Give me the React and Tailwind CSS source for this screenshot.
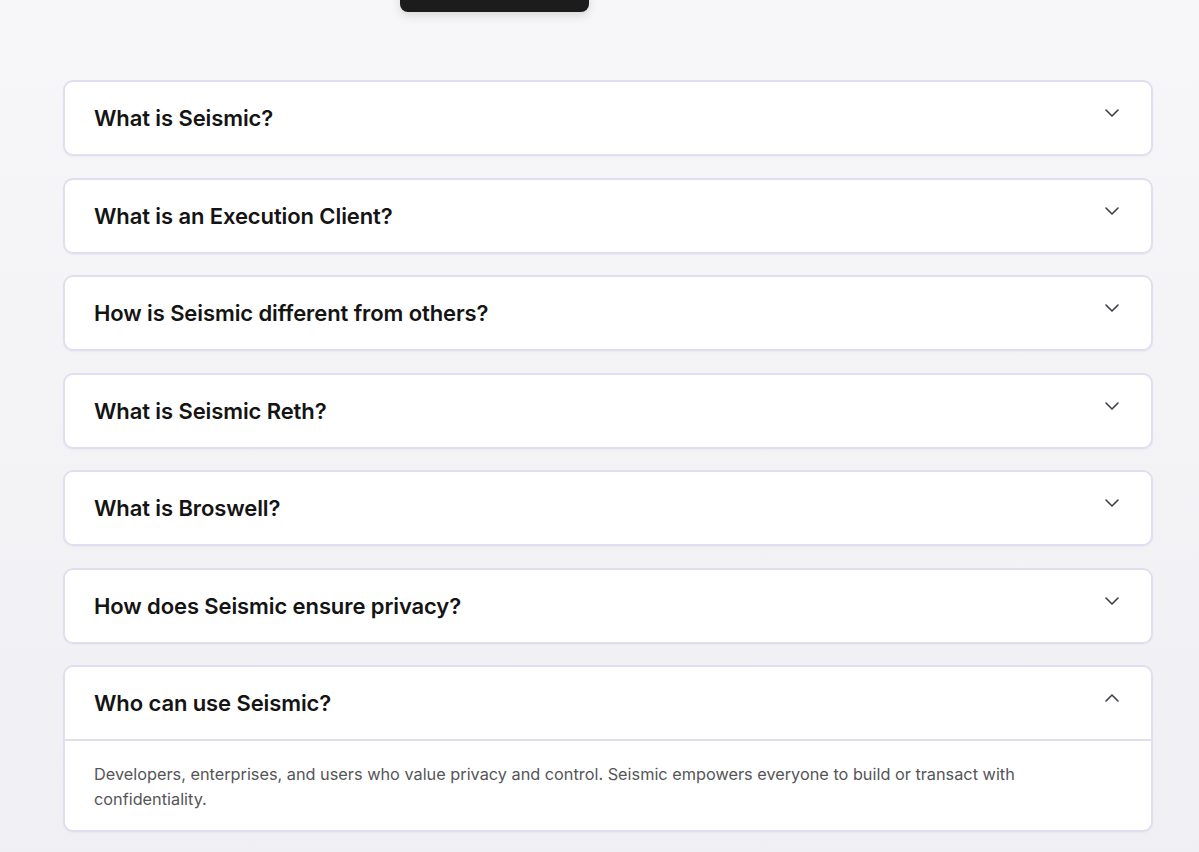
import { useState } from "react";
import { ChevronDown, ChevronUp } from "lucide-react";

const faqs = [
  { q: "What is Seismic?", a: "Seismic is a privacy-first blockchain with encrypted state built in." },
  { q: "What is an Execution Client?", a: "The software that executes transactions and maintains the chain state." },
  { q: "How is Seismic different from others?", a: "Seismic brings native on-chain privacy without sacrificing composability." },
  { q: "What is Seismic Reth?", a: "Seismic's execution client, built on top of Reth." },
  { q: "What is Broswell?", a: "Broswell is Seismic's developer tooling suite." },
  { q: "How does Seismic ensure privacy?", a: "Through secure enclaves and shielded types at the protocol level." },
  {
    q: "Who can use Seismic?",
    a: "Developers, enterprises, and users who value privacy and control. Seismic empowers everyone to build or transact with confidentiality.",
  },
];

const FaqItem = ({ q, a, open, onToggle }) => {
  return (
    <div className="rounded-[10px] border-2 border-[#e0dff1] bg-white shadow-[0_1px_2px_rgba(20,20,60,0.04)] overflow-hidden">
      <button
        onClick={onToggle}
        className="w-full h-[72px] flex items-start justify-between pl-[29px] pr-[27px] text-left cursor-pointer"
      >
        <span className="self-center text-[22px] leading-[28px] font-semibold text-[#141414] tracking-[-0.1px]">
          {q}
        </span>
        {open ? (
          <ChevronUp size={24} strokeWidth={1.6} className="mt-[19px] text-[#3f3f46]" />
        ) : (
          <ChevronDown size={24} strokeWidth={1.6} className="mt-[19px] text-[#3f3f46]" />
        )}
      </button>
      {open && (
        <div className="border-t-2 border-[#e0dff1] pl-[29px] pr-[27px] pt-[21px] pb-[18px]">
          <p className="text-[16.3px] leading-[25px] text-[#555558]">{a}</p>
        </div>
      )}
    </div>
  );
};

export default function App() {
  const [openIdx, setOpenIdx] = useState(6);

  return (
    <div
      className="min-h-[852px] bg-gradient-to-b from-[#f7f7f9] to-[#f0f0f4] pb-[21px]"
      style={{ fontFamily: "Inter, 'Noto Sans', sans-serif" }}
    >
      {/* top tab, mostly scrolled off */}
      <div className="ml-[400px] w-[189px] h-[44px] -mt-[32px] rounded-[8px] bg-[#1c1c1c] shadow-[0_4px_10px_rgba(0,0,0,0.12)]" />

      <div className="ml-[63px] w-[1090px] mt-[68px] flex flex-col gap-[21.5px]">
        {faqs.map((f, i) => (
          <FaqItem
            key={f.q}
            q={f.q}
            a={f.a}
            open={openIdx === i}
            onToggle={() => setOpenIdx(openIdx === i ? -1 : i)}
          />
        ))}
      </div>
    </div>
  );
}
